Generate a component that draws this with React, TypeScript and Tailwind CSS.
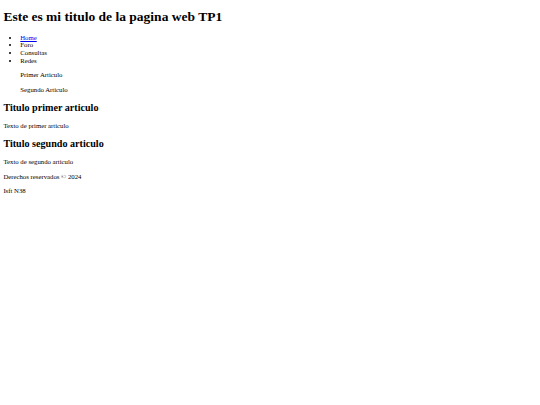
export default function App() {
  const p = "my-[6.75px]";
  return (
    <div className="min-h-screen bg-white px-[3.375px] text-black text-[6.75px] leading-[1.149] [font-family:'Liberation_Serif',serif]">
      <header>
        <h1 className="my-[9.05px] text-[13.5px] font-bold">Este es mi titulo de la pagina web TP1</h1>
      </header>
      <nav>
        <ul className="my-[6.75px] list-disc pl-[16.875px]">
          <li>
            <a href="#" className="text-[#0000ee] underline">
              Home
            </a>
          </li>
          <li>Foro</li>
          <li>Consultas</li>
          <li>Redes</li>
        </ul>
      </nav>
      <aside className="pl-[16.875px]">
        <p className={p}>Primer Articulo</p>
        <p className={p}>Segundo Articulo</p>
      </aside>
      <main>
        <article>
          <h2 className="my-[8.4px] text-[10.125px] font-bold">Titulo primer articulo</h2>
          <p className={p}>Texto de primer articulo</p>
        </article>
        <article>
          <h2 className="my-[8.4px] text-[10.125px] font-bold">Titulo segundo articulo</h2>
          <p className={p}>Texto de segundo articulo</p>
        </article>
      </main>
      <footer>
        <p className={p}>Derechos reservados © 2024</p>
        <p className={p}>Isft N38</p>
      </footer>
    </div>
  );
}
